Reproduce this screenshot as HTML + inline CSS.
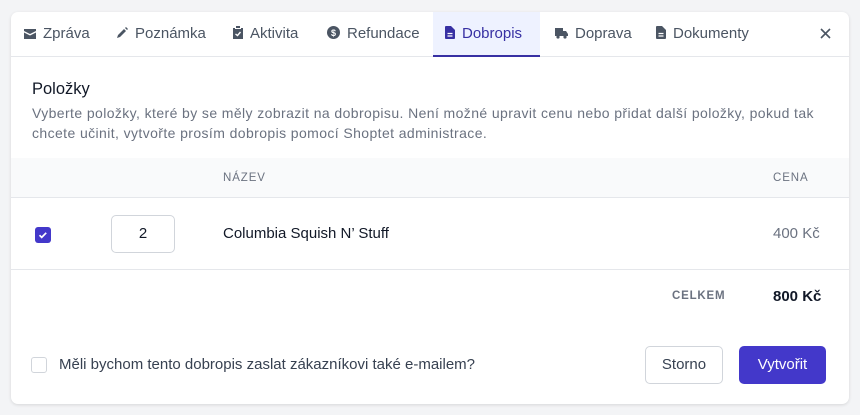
<!DOCTYPE html>
<html><head><meta charset="utf-8"><style>
*{box-sizing:border-box;margin:0;padding:0}
body{width:860px;height:415px;background:#f3f4f6;font-family:"Liberation Sans",sans-serif;color:#111827;position:relative;overflow:hidden}
.card{position:absolute;left:11px;top:12px;width:838px;height:392px;background:#fff;border-radius:7px;box-shadow:0 1px 3px rgba(0,0,0,.12)}
.tabs{position:absolute;left:0;top:0;width:838px;height:45px;border-bottom:1px solid #e5e7eb}
.tab{position:absolute;top:0;height:45px;line-height:44px;font-size:15px;color:#4b5563;white-space:nowrap}
.tab svg{display:inline-block;vertical-align:-1px;margin-right:7px}
.tab.act{background:#eef2ff;color:#3730a3;border-bottom:2px solid #3730a3;padding:0 12px}
.abs{position:absolute;white-space:nowrap}
</style></head><body>
<div class="card">
<div class="tabs">
 <div class="tab" style="left:13px"><svg width="12" height="10" viewBox="0 0 12 10"><path d="M0 0h12v2L6 5 0 2z M0 3.5l6 3 6-3V10H0z" fill="#4b5563"/></svg>Zpráva</div>
 <div class="tab" style="left:105px"><svg width="12" height="12" viewBox="0 0 12 12"><path d="M1 11l1-3 6-6 2 2-6 6z M9 1l1-1 2 2-1 1z" fill="#4b5563"/></svg>Poznámka</div>
 <div class="tab" style="left:222px"><svg width="10" height="13" viewBox="0 0 10 13"><path d="M0 2h2v1h6V2h2v11H0z M3 0h4v2H3z" fill="#4b5563"/><path d="M2.5 8l2 1.5 3-3.5" stroke="#fff" stroke-width="1.4" fill="none"/></svg>Aktivita</div>
 <div class="tab" style="left:316px"><svg width="13" height="13" viewBox="0 0 13 13"><circle cx="6.5" cy="6.5" r="6.5" fill="#4b5563"/><text x="6.5" y="10" font-size="9" font-weight="bold" text-anchor="middle" fill="#fff" font-family="Liberation Sans">$</text></svg>Refundace</div>
 <div class="tab act" style="left:422px;width:107px"><svg width="10" height="13" viewBox="0 0 10 13"><path d="M0 1q0-1 1-1h5l4 4v8q0 1-1 1H1q-1 0-1-1z" fill="#3730a3"/><path d="M2.5 7.5h5M2.5 10h5" stroke="#fff" stroke-width="1.2"/></svg>Dobropis</div>
 <div class="tab" style="left:544px"><svg width="13" height="12" viewBox="0 0 13 12"><path d="M0 1h8v8H0z M8 4h3l2 3v2H8z" fill="#4b5563"/><circle cx="3" cy="10" r="1.6" fill="#4b5563"/><circle cx="10" cy="10" r="1.6" fill="#4b5563"/></svg>Doprava</div>
 <div class="tab" style="left:645px"><svg width="10" height="13" viewBox="0 0 10 13"><path d="M0 1q0-1 1-1h5l4 4v8q0 1-1 1H1q-1 0-1-1z" fill="#4b5563"/><path d="M2.5 7.5h5M2.5 10h5" stroke="#fff" stroke-width="1.2"/></svg>Dokumenty</div>
 <svg class="abs" style="left:809px;top:16px" width="11" height="11" viewBox="0 0 11 11"><path d="M1 1l9 9M10 1l-9 9" stroke="#4b5563" stroke-width="1.6"/></svg>
</div>
<div class="abs" style="left:21px;top:68px;font-size:16.5px;color:#111827">Položky</div>
<div class="abs" style="left:21px;top:91px;font-size:14px;letter-spacing:.4px;color:#6b7280;line-height:20px">Vyberte položky, které by se měly zobrazit na dobropisu. Není možné upravit cenu nebo přidat další položky, pokud tak<br>chcete učinit, vytvořte prosím dobropis pomocí Shoptet administrace.</div>
<div class="abs" style="left:0;top:146px;width:838px;height:40px;background:#f9fafb;border-bottom:1px solid #e5e7eb"></div>
<div class="abs" style="left:212px;top:160px;font-size:11.5px;letter-spacing:.9px;color:#6b7280">NÁZEV</div>
<div class="abs" style="left:762px;top:160px;font-size:11.5px;letter-spacing:.9px;color:#6b7280">CENA</div>
<div class="abs" style="left:24px;top:215px;width:16px;height:16px;border-radius:3px;background:#4338ca"><svg width="16" height="16" viewBox="0 0 16 16"><path d="M4.5 8.2l2.2 2.2 4.5-4.6" stroke="#fff" stroke-width="1.7" fill="none"/></svg></div>
<div class="abs" style="left:100px;top:203px;width:64px;height:38px;border:1px solid #d1d5db;border-radius:5px;text-align:center;line-height:36px;font-size:15px">2</div>
<div class="abs" style="left:212px;top:213px;font-size:15px">Columbia Squish N’ Stuff</div>
<div class="abs" style="left:762px;top:213px;font-size:15px;color:#6b7280">400 Kč</div>
<div class="abs" style="left:0;top:257px;width:838px;height:1px;background:#e5e7eb"></div>
<div class="abs" style="left:661px;top:278px;font-size:11.5px;font-weight:bold;letter-spacing:.8px;color:#6b7280">CELKEM</div>
<div class="abs" style="left:762px;top:276px;font-size:15px;font-weight:bold">800 Kč</div>
<div class="abs" style="left:20px;top:345px;width:16px;height:16px;border:1px solid #d1d5db;border-radius:3px"></div>
<div class="abs" style="left:48px;top:344px;font-size:15px;color:#374151">Měli bychom tento dobropis zaslat zákazníkovi také e-mailem?</div>
<div class="abs" style="left:634px;top:334px;width:78px;height:38px;border:1px solid #d1d5db;border-radius:5px;text-align:center;line-height:36px;font-size:15px;color:#374151">Storno</div>
<div class="abs" style="left:728px;top:334px;width:87px;height:38px;background:#4338ca;border-radius:5px;text-align:center;line-height:38px;font-size:15px;color:#fff">Vytvořit</div>
</div>
</body></html>
